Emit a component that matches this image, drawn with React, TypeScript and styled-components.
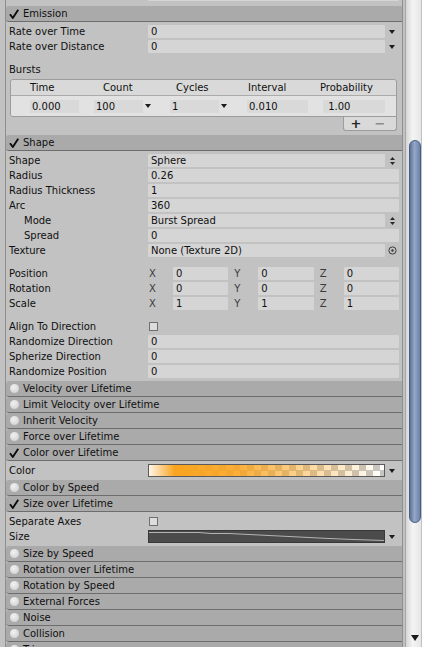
import { ReactNode } from "react";
import styled, { createGlobalStyle } from "styled-components";

const GlobalStyle = createGlobalStyle`
  html, body {
    margin: 0;
    padding: 0;
    background: #c2c2c2;
  }
  body {
    font-family: "DejaVu Sans", "Liberation Sans", sans-serif;
    font-size: 10px;
    color: #101010;
    overflow: hidden;
  }
`;

const Window = styled.div`
  display: flex;
  height: 647px;
  overflow: hidden;
`;

const Inspector = styled.div`
  margin-left: 5px;
  width: 396px;
  flex: none;
  border-left: 1px solid #8e8e8e;
  border-right: 1px solid #8e8e8e;
  overflow: hidden;
`;

/* tail of the module above, scrolled mostly out of view */
const Clipped = styled.div`
  margin-top: -13px;
  padding-bottom: 4px;
`;

/* module title bar */
const ModuleHeader = styled.div`
  height: 15px;
  display: flex;
  align-items: center;
  gap: 4px;
  padding-left: 3px;
  background: #aaaaaa;
  border-bottom: 1px solid #6d6d6d;
  border-radius: 3px 0 0 3px;
  white-space: nowrap;
`;

const ToggleBox = styled.span`
  width: 10px;
  height: 10px;
  flex: none;
  display: flex;
  align-items: center;
  justify-content: center;
`;

const Dot = styled.span`
  width: 9px;
  height: 9px;
  border-radius: 50%;
  background: radial-gradient(circle at 40% 35%, #f2f2f2, #d6d6d6 70%, #c4c4c4);
`;

const ModuleBody = styled.div<{ $top?: number; $bottom?: number }>`
  padding-top: ${(p) => p.$top ?? 2}px;
  padding-bottom: ${(p) => p.$bottom ?? 2}px;
`;

/* property rows */
const Row = styled.div`
  display: flex;
  align-items: center;
  height: 15px;
`;

const Label = styled.div<{ $indent?: boolean }>`
  width: 142px;
  flex: none;
  box-sizing: border-box;
  padding-left: ${(p) => (p.$indent ? 18 : 3)}px;
  white-space: nowrap;
`;

const FieldGroup = styled.div`
  flex: 1;
  display: flex;
  align-items: center;
  margin-right: 3px;
  min-width: 0;
`;

const Field = styled.div`
  flex: 1;
  height: 13px;
  line-height: 13px;
  padding-left: 3px;
  background: #d5d5d5;
  border-radius: 1px;
  white-space: nowrap;
  overflow: hidden;
`;

const Slot = styled.div<{ $w?: number }>`
  width: ${(p) => p.$w ?? 14}px;
  flex: none;
  display: flex;
  align-items: center;
  justify-content: center;
`;

const Caret = styled.span`
  width: 0;
  height: 0;
  border-left: 3px solid transparent;
  border-right: 3px solid transparent;
  border-top: 4px solid #1c1c1c;
`;

const Spacer = styled.div`
  height: 8px;
`;

const Check = styled.span`
  width: 9px;
  height: 9px;
  margin-left: 1px;
  box-sizing: border-box;
  border: 1px solid #6f6f6f;
  background: #dcdcdc;
`;

/* vector3 fields */
const Vec = styled.div`
  flex: 1;
  display: grid;
  grid-template-columns: repeat(3, 1fr);
  column-gap: 5px;
  margin-right: 3px;
`;

const Axis = styled.div`
  display: flex;
  align-items: center;
`;

const AxisName = styled.span`
  width: 25px;
  flex: none;
  box-sizing: border-box;
  padding-left: 1px;
  color: #3a3a3a;
`;

/* bursts list */
const BurstTable = styled.div`
  margin: 2px 5px 0 4px;
  border: 1px solid #9c9c9c;
  border-radius: 3px 3px 0 3px;
  overflow: hidden;
`;

const BurstGrid = styled.div<{ $head?: boolean }>`
  display: grid;
  grid-template-columns: 64px 76px 77px 76px 1fr;
  align-items: center;
  padding: 0 11px 0 19px;
  height: ${(p) => (p.$head ? 15 : 20)}px;
  background: ${(p) => (p.$head ? "#d9d9d9" : "#e2e2e2")};
  border-bottom: ${(p) => (p.$head ? "1px solid #ababab" : "none")};
`;

const HeadCell = styled.div<{ $shift: number }>`
  margin-left: ${(p) => p.$shift}px;
  white-space: nowrap;
`;

const BurstCell = styled.div`
  display: flex;
  align-items: center;
`;

const BurstField = styled.div<{ $w?: number }>`
  width: ${(p) => (p.$w ? `${p.$w}px` : "100%")};
  height: 13px;
  line-height: 13px;
  padding-left: 2px;
  box-sizing: border-box;
  background: #d9d9d9;
`;

const BurstFooter = styled.div`
  width: 52px;
  height: 13px;
  margin: 0 5px 0 auto;
  display: grid;
  grid-template-columns: 24px 24px;
  align-items: center;
  justify-items: center;
  border: 1px solid #9c9c9c;
  border-top: none;
  border-radius: 0 0 3px 3px;
  background: #d9d9d9;
`;

const ListButton = styled.span<{ $dim?: boolean }>`
  font-size: 13px;
  font-weight: bold;
  line-height: 13px;
  color: ${(p) => (p.$dim ? "#8c8c8c" : "#262626")};
`;

/* gradient and curve previews */
const GradientBox = styled.div`
  flex: 1;
  height: 13px;
  box-sizing: border-box;
  border: 1px solid #5a5a5a;
  background:
    linear-gradient(
      to right,
      #fff6e8 0%,
      #f9a41f 11%,
      rgba(249, 164, 31, 0.88) 38%,
      rgba(249, 170, 45, 0.4) 72%,
      rgba(255, 255, 255, 0) 100%
    ),
    conic-gradient(#ffffff 25%, #c6c6c6 0 50%, #ffffff 0 75%, #c6c6c6 0) 0 0 / 14px 11px;
`;

const CurveBox = styled.div`
  flex: 1;
  height: 13px;
  box-sizing: border-box;
  border: 1px solid #383838;
  background: #4b4b4b;
  overflow: hidden;

  svg {
    display: block;
  }
`;

/* scrollbar */
const ScrollBar = styled.div`
  flex: 1;
  display: flex;
  flex-direction: column;
  padding-left: 2px;
`;

const Track = styled.div`
  flex: 1;
  width: 16px;
  display: flex;
  flex-direction: column;
  box-sizing: border-box;
  border-left: 1px solid #a6a6a6;
  background: linear-gradient(to right, #d6d6d6, #f4f4f4 45%, #e6e6e6);
`;

const Thumb = styled.div`
  margin: 140px 0 0 3px;
  width: 12px;
  height: 383px;
  box-sizing: border-box;
  border: 1px solid #4c5e80;
  border-radius: 6px;
  background: linear-gradient(to right, #5f7398, #93a8c8 45%, #6c82a8);
`;

const ArrowButton = styled.div`
  margin-top: auto;
  height: 18px;
  display: flex;
  align-items: center;
  justify-content: center;
  padding-left: 2px;
`;

const DownArrow = styled.span`
  width: 0;
  height: 0;
  border-left: 4px solid transparent;
  border-right: 4px solid transparent;
  border-top: 6px solid #1a1a1a;
`;

const Tick = () => (
  <svg width="10" height="10" viewBox="0 0 10 10">
    <path d="M1 5.2 L3.8 9 L9.2 0.8" fill="none" stroke="#0c0c0c" strokeWidth="1.9" strokeLinejoin="round" />
  </svg>
);

const PopupArrows = () => (
  <svg width="5" height="8" viewBox="0 0 5 8">
    <path d="M0 3 L2.5 0 L5 3 Z M0 5 L2.5 8 L5 5 Z" fill="#2a2a2a" />
  </svg>
);

const ObjectPicker = () => (
  <svg width="9" height="9" viewBox="0 0 9 9">
    <circle cx="4.5" cy="4.5" r="3.6" fill="none" stroke="#3c3c3c" strokeWidth="1" />
    <circle cx="4.5" cy="4.5" r="1.2" fill="#3c3c3c" />
  </svg>
);

const SizeCurve = () => (
  <svg width="235" height="11" viewBox="0 0 235 11">
    <polyline
      points="0,1.5 50,1.5 62,2.5 80,2.5 100,3.5 120,4.5 140,5.5 160,6.5 180,7.5 205,8.5 235,9.5"
      fill="none"
      stroke="#b4b4b4"
      strokeWidth="1"
    />
  </svg>
);

const Header = ({ on, children }: { on?: boolean; children: ReactNode }) => (
  <ModuleHeader>
    <ToggleBox>{on ? <Tick /> : <Dot />}</ToggleBox>
    {children}
  </ModuleHeader>
);

type Trail = "none" | "caret" | "popup" | "picker";

const Prop = ({
  label,
  value,
  indent,
  trail = "none",
}: {
  label: string;
  value: string;
  indent?: boolean;
  trail?: Trail;
}) => (
  <Row>
    <Label $indent={indent}>{label}</Label>
    <FieldGroup>
      <Field>{value}</Field>
      {trail !== "none" && (
        <Slot>
          {trail === "caret" && <Caret />}
          {trail === "popup" && <PopupArrows />}
          {trail === "picker" && <ObjectPicker />}
        </Slot>
      )}
    </FieldGroup>
  </Row>
);

const VecProp = ({ label, v }: { label: string; v: [string, string, string] }) => (
  <Row>
    <Label>{label}</Label>
    <Vec>
      {["X", "Y", "Z"].map((a, i) => (
        <Axis key={a}>
          <AxisName>{a}</AxisName>
          <Field>{v[i]}</Field>
        </Axis>
      ))}
    </Vec>
  </Row>
);

const Toggle = ({ label }: { label: string }) => (
  <Row>
    <Label>{label}</Label>
    <Check />
  </Row>
);

const burstHeads: [string, number][] = [
  ["Time", 0],
  ["Count", 9],
  ["Cycles", 6],
  ["Interval", 1],
  ["Probability", -3],
];

const collapsedTop = [
  "Velocity over Lifetime",
  "Limit Velocity over Lifetime",
  "Inherit Velocity",
  "Force over Lifetime",
];

const collapsedBottom = [
  "Size by Speed",
  "Rotation over Lifetime",
  "Rotation by Speed",
  "External Forces",
  "Noise",
  "Collision",
  "Triggers",
];

export default function App() {
  return (
    <>
      <GlobalStyle />
      <Window>
        <Inspector>
          <Clipped>
            <Prop label="Ray" value="" />
          </Clipped>

          <Header on>Emission</Header>
          <ModuleBody $bottom={4}>
            <Prop label="Rate over Time" value="0" trail="caret" />
            <Prop label="Rate over Distance" value="0" trail="caret" />
            <Spacer />
            <Row>
              <Label>Bursts</Label>
            </Row>
            <BurstTable>
              <BurstGrid $head>
                {burstHeads.map(([h, s]) => (
                  <HeadCell key={h} $shift={s}>
                    {h}
                  </HeadCell>
                ))}
              </BurstGrid>
              <BurstGrid>
                <BurstCell>
                  <BurstField $w={49}>0.000</BurstField>
                </BurstCell>
                <BurstCell>
                  <BurstField $w={49}>100</BurstField>
                  <Slot $w={10}>
                    <Caret />
                  </Slot>
                </BurstCell>
                <BurstCell>
                  <BurstField $w={49}>1</BurstField>
                  <Slot $w={10}>
                    <Caret />
                  </Slot>
                </BurstCell>
                <BurstCell>
                  <BurstField $w={61}>0.010</BurstField>
                </BurstCell>
                <BurstCell>
                  <BurstField>&nbsp;1.00</BurstField>
                </BurstCell>
              </BurstGrid>
            </BurstTable>
            <BurstFooter>
              <ListButton>+</ListButton>
              <ListButton $dim>−</ListButton>
            </BurstFooter>
          </ModuleBody>

          <Header on>Shape</Header>
          <ModuleBody>
            <Prop label="Shape" value="Sphere" trail="popup" />
            <Prop label="Radius" value="0.26" />
            <Prop label="Radius Thickness" value="1" />
            <Prop label="Arc" value="360" />
            <Prop label="Mode" value="Burst Spread" indent trail="popup" />
            <Prop label="Spread" value="0" indent />
            <Prop label="Texture" value="None (Texture 2D)" trail="picker" />
            <Spacer />
            <VecProp label="Position" v={["0", "0", "0"]} />
            <VecProp label="Rotation" v={["0", "0", "0"]} />
            <VecProp label="Scale" v={["1", "1", "1"]} />
            <Spacer />
            <Toggle label="Align To Direction" />
            <Prop label="Randomize Direction" value="0" />
            <Prop label="Spherize Direction" value="0" />
            <Prop label="Randomize Position" value="0" />
          </ModuleBody>

          {collapsedTop.map((m) => (
            <Header key={m}>{m}</Header>
          ))}

          <Header on>Color over Lifetime</Header>
          <ModuleBody>
            <Row>
              <Label>Color</Label>
              <FieldGroup>
                <GradientBox />
                <Slot>
                  <Caret />
                </Slot>
              </FieldGroup>
            </Row>
          </ModuleBody>

          <Header>Color by Speed</Header>
          <Header on>Size over Lifetime</Header>
          <ModuleBody>
            <Toggle label="Separate Axes" />
            <Row>
              <Label>Size</Label>
              <FieldGroup>
                <CurveBox>
                  <SizeCurve />
                </CurveBox>
                <Slot>
                  <Caret />
                </Slot>
              </FieldGroup>
            </Row>
          </ModuleBody>

          {collapsedBottom.map((m) => (
            <Header key={m}>{m}</Header>
          ))}
        </Inspector>

        <ScrollBar>
          <Track>
            <Thumb />
            <ArrowButton>
              <DownArrow />
            </ArrowButton>
          </Track>
        </ScrollBar>
      </Window>
    </>
  );
}
